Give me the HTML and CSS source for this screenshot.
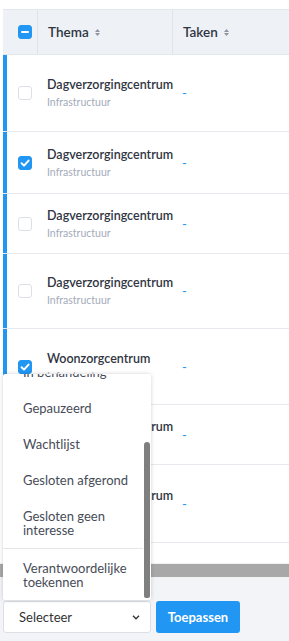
FILE: index.html
```html
<!DOCTYPE html>
<html lang="nl">
<head>
	<meta charset="UTF-8">
	<title>Projecten</title>
	<link rel="stylesheet" href="styles.css">
</head>
<body>
	<div class="card">
		<div class="grid head">
			<div class="cell check-cell"><span class="box on"><span class="minus"></span></span></div>
			<div class="cell col">Thema <svg class="sort" width="5" height="9" viewBox="0 0 5 9"><path d="M0 4 L2.5 1 L5 4Z M0 5 L2.5 8 L5 5Z"/></svg></div>
			<div class="cell col">Taken <svg class="sort" width="5" height="9" viewBox="0 0 5 9"><path d="M0 4 L2.5 1 L5 4Z M0 5 L2.5 8 L5 5Z"/></svg></div>
		</div>

		<div class="grid row h77">
			<div class="cell check-cell"><span class="box"></span></div>
			<div class="cell"><div class="title">Dagverzorgingcentrum</div><div class="sub">Infrastructuur</div></div>
			<div class="cell"><a class="dash" href="#">-</a></div>
		</div>
		<div class="grid row h62">
			<div class="cell check-cell"><span class="box on"><svg width="14" height="14" viewBox="0 0 14 14"><path d="M3.6 7.3 L6 9.6 L10.6 4.6"/></svg></span></div>
			<div class="cell"><div class="title">Dagverzorgingcentrum</div><div class="sub">Infrastructuur</div></div>
			<div class="cell"><a class="dash" href="#">-</a></div>
		</div>
		<div class="grid row h60">
			<div class="cell check-cell"><span class="box"></span></div>
			<div class="cell"><div class="title">Dagverzorgingcentrum</div><div class="sub">Infrastructuur</div></div>
			<div class="cell"><a class="dash" href="#">-</a></div>
		</div>
		<div class="grid row h75">
			<div class="cell check-cell"><span class="box"></span></div>
			<div class="cell"><div class="title">Dagverzorgingcentrum</div><div class="sub">Infrastructuur</div></div>
			<div class="cell"><a class="dash" href="#">-</a></div>
		</div>
		<div class="grid row h76">
			<div class="cell check-cell"><span class="box on"><svg width="14" height="14" viewBox="0 0 14 14"><path d="M3.6 7.3 L6 9.6 L10.6 4.6"/></svg></span></div>
			<div class="cell"><div class="title">Woonzorgcentrum</div><div class="sub">Infrastructuur</div></div>
			<div class="cell"><a class="dash" href="#">-</a></div>
		</div>
		<div class="grid row h60">
			<div class="cell check-cell"><span class="box"></span></div>
			<div class="cell"><div class="title">Dagverzorgingcentrum</div><div class="sub">Infrastructuur</div></div>
			<div class="cell"><a class="dash" href="#">-</a></div>
		</div>
		<div class="grid row h78">
			<div class="cell check-cell"><span class="box"></span></div>
			<div class="cell"><div class="title">Dagverzorgingcentrum</div><div class="sub">Infrastructuur</div></div>
			<div class="cell"><a class="dash" href="#">-</a></div>
		</div>

		<div class="hscroll"><div class="hthumb"></div></div>
	</div>

	<div class="actions">
		<div class="select-wrap">
			<div class="menu">
				<ul class="menu-list">
					<li>In behandeling</li>
					<li>Gepauzeerd</li>
					<li>Wachtlijst</li>
					<li>Gesloten afgerond</li>
					<li>Gesloten geen interesse</li>
					<li class="sep">Verantwoordelijke toekennen</li>
				</ul>
				<div class="vthumb"></div>
			</div>
			<div class="select">
				<span>Selecteer</span>
				<svg width="8" height="5" viewBox="0 0 8 5"><path d="M1 0.8 L4 3.8 L7 0.8"/></svg>
			</div>
		</div>
		<button class="btn">Toepassen</button>
	</div>
</body>
</html>
```

FILE: styles.css
```css
*{
	margin:0;
	padding:0;
	box-sizing: border-box;
}
body{
	background: #f3f4f7;
	font-family: Lato, "Open Sans", sans-serif;
	color: #2f3542;
	width: 289px;
	overflow: hidden;
}
.card{
	background: #fff;
	padding: 9px 0 0 3px;
}
.grid{
	display: grid;
	grid-template-columns: 34px 135px 1fr;
}
.head{
	height: 46px;
	background: #eef1f6;
	border-top: 1px solid #e3e7ed;
	border-bottom: 1px solid #e3e7ed;
}
.cell{
	display: flex;
	flex-direction: column;
	justify-content: center;
	padding-left: 10px;
}
.check-cell{
	padding-left: 15px;
}
.head .cell + .cell{
	border-left: 1px solid #e1e5eb;
}
.col{
	flex-direction: row;
	align-items: center;
	justify-content: flex-start;
	font-size: 13.5px;
	font-weight: 600;
	color: #2f3542;
	white-space: pre;
}
.sort{
	margin-left: 3px;
	fill: #8f96a3;
}
.row{
	border-bottom: 1px solid #e6e9ee;
}
.row .check-cell{
	border-left: 4px solid #2196f3;
	padding-left: 11px;
}
.h60{ height: 60px; }
.h62{ height: 62px; }
.h75{ height: 75px; }
.h76{ height: 76px; }
.h77{ height: 77px; }
.h78{ height: 78px; }
.box{
	display: block;
	width: 14px;
	height: 14px;
	border: 1px solid #dcdfe5;
	border-radius: 3px;
	background: #fff;
	position: relative;
}
.box.on{
	background: #2196f3;
	border-color: #2196f3;
}
.box svg{
	position: absolute;
	left: -1px;
	top: -1px;
	fill: none;
	stroke: #fff;
	stroke-width: 2;
	stroke-linecap: round;
	stroke-linejoin: round;
}
.minus{
	position: absolute;
	left: 2px;
	top: 5px;
	width: 8px;
	height: 2px;
	background: #fff;
	border-radius: 1px;
}
.title{
	font-size: 12.5px;
	font-weight: 600;
	line-height: 18px;
	color: #2f3542;
	white-space: nowrap;
}
.sub{
	font-size: 10.5px;
	line-height: 16px;
	color: #a3abba;
}
.dash{
	color: #2196f3;
	text-decoration: none;
	font-size: 13px;
}
.hscroll{
	margin-top: 20px;
	height: 15px;
	background: #f1f1f1;
	padding: 1px 0;
	margin-left: -3px;
}
.hthumb{
	height: 13px;
	background: #a8a8a8;
}
.actions{
	display: flex;
	gap: 5px;
	padding: 23px 0 8px 3px;
}
.select-wrap{
	position: relative;
}
.select{
	width: 148px;
	height: 32px;
	background: #fff;
	border: 1px solid #dcdfe6;
	border-radius: 3px;
	display: flex;
	align-items: center;
	justify-content: space-between;
	padding: 0 10px 0 15px;
	font-size: 13px;
	color: #333;
}
.select svg{
	fill: none;
	stroke: #333;
	stroke-width: 1.3;
}
.btn{
	width: 84px;
	height: 32px;
	border: 0;
	border-radius: 3px;
	background: #2196f3;
	color: #fff;
	font-family: inherit;
	font-size: 13px;
	font-weight: 700;
}
.menu{
	position: absolute;
	left: 0;
	bottom: calc(100% + 1px);
	width: 148px;
	height: 226px;
	background: #fff;
	overflow: hidden;
	border-radius: 2px;
	box-shadow: 0 0 4px rgba(0,0,0,.18);
}
.menu-list{
	list-style: none;
	margin-top: -20px;
	padding-right: 8px;
}
.menu-list li{
	padding: 11px 10px 11px 20px;
	font-size: 13px;
	line-height: 14px;
	color: #474c57;
}
.menu-list .sep{
	border-top: 1px solid #e6e6e6;
	padding-top: 12px;
}
.vthumb{
	position: absolute;
	right: 1px;
	top: 68px;
	bottom: 2px;
	width: 6px;
	background: #7f7f7f;
	border-radius: 3px 3px 2px 2px;
}
```
